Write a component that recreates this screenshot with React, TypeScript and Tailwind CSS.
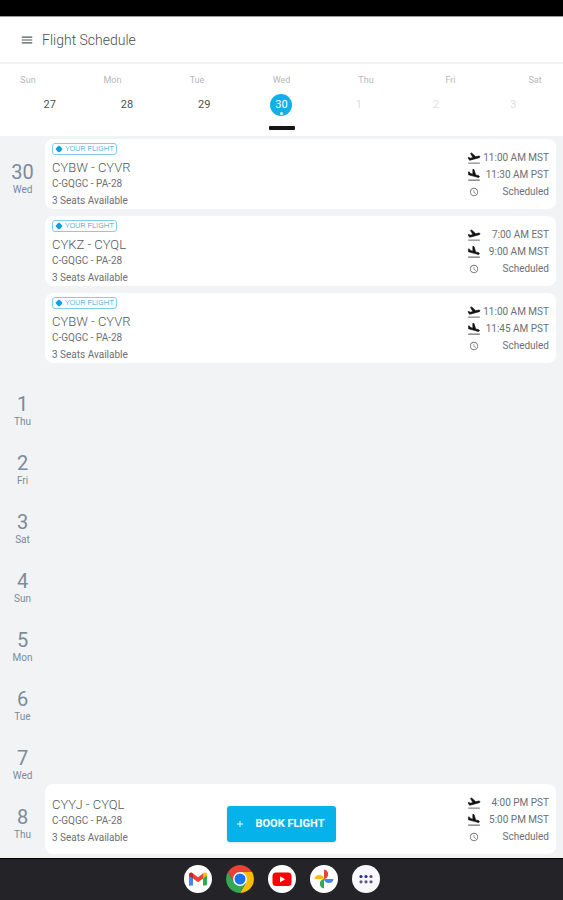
import { MdAdd, MdAccessTime, MdMenu } from 'react-icons/md';

type Flight = {
  route: string;
  aircraft: string;
  departs: string;
  arrives: string;
  mine?: boolean;
};

type Day = { date: number; name: string; flights: Flight[] };

const weekdays = ['Sun', 'Mon', 'Tue', 'Wed', 'Thu', 'Fri', 'Sat'];
const weekDates = [27, 28, 29, 30, 1, 2, 3];

const days: Day[] = [
  {
    date: 30,
    name: 'Wed',
    flights: [
      { route: 'CYBW - CYVR', aircraft: 'C-GQGC - PA-28', departs: '11:00 AM MST', arrives: '11:30 AM PST', mine: true },
      { route: 'CYKZ - CYQL', aircraft: 'C-GQGC - PA-28', departs: '7:00 AM EST', arrives: '9:00 AM MST', mine: true },
      { route: 'CYBW - CYVR', aircraft: 'C-GQGC - PA-28', departs: '11:00 AM MST', arrives: '11:45 AM PST', mine: true },
    ],
  },
  { date: 1, name: 'Thu', flights: [] },
  { date: 2, name: 'Fri', flights: [] },
  { date: 3, name: 'Sat', flights: [] },
  { date: 4, name: 'Sun', flights: [] },
  { date: 5, name: 'Mon', flights: [] },
  { date: 6, name: 'Tue', flights: [] },
  { date: 7, name: 'Wed', flights: [] },
  {
    date: 8,
    name: 'Thu',
    flights: [{ route: 'CYYJ - CYQL', aircraft: 'C-GQGC - PA-28', departs: '4:00 PM PST', arrives: '5:00 PM MST' }],
  },
];

function TakeoffIcon() {
  return (
    <svg viewBox="0 0 24 24" className="size-[14px] text-[#111111]" aria-hidden="true">
      <path d="M2 20h20v1.500H2z" fill="#555" />
      <path
        d="M22.070 9.640c-.210-.800-1.040-1.280-1.840-1.060L14.920 10l-6.900-6.430-1.930.510 4.140 7.170-4.970 1.330-1.970-1.540-1.450.390 1.820 3.160.770 1.330 1.600-.430 5.310-1.420 4.350-1.160L21 11.490c.810-.230 1.280-1.050 1.070-1.850z"
        fill="currentColor"
        stroke="currentColor"
        strokeWidth="1.200"
      />
    </svg>
  );
}

function LandingIcon() {
  return (
    <svg viewBox="0 0 24 24" className="size-[14px] text-[#111111]" aria-hidden="true">
      <path d="M2 20h20v1.500H2z" fill="#333" />
      <path
        d="M14 14.700l5.310 1.420c.800.210 1.620-.260 1.840-1.060.210-.800-.260-1.620-1.060-1.840l-5.310-1.420-2.760-9.020L10.090 2.300v8.280L5.120 9.250l-.930-2.320-1.450-.390v5.170l1.600.430z"
        fill="currentColor"
        stroke="currentColor"
        strokeWidth="1.200"
      />
    </svg>
  );
}

function BadgeIcon() {
  return (
    <svg viewBox="0 0 16 16" className="size-2" aria-hidden="true">
      <path d="M8 1l3 2.500L15 8l-4 4.500L8 15l-3-2.500L1 8l4-4.500z" fill="#12a0dc" />
      <circle cx="8" cy="8" r="5" fill="#12a0dc" />
    </svg>
  );
}

function WeekStrip() {
  return (
    <section className="border-t-2 border-[#f0f2f3] bg-white pb-[6px]">
      <div className="flex justify-between px-3 pt-2 text-[9px] leading-4 text-[#b4b8bb]">
        {weekdays.map((name) => (
          <span key={name} className="w-8 text-center">
            {name}
          </span>
        ))}
      </div>
      <div className="mt-[6px] grid grid-cols-7 px-[11px]">
        {weekDates.map((date) => (
          <div key={date} className="flex justify-center">
            {date === 30 ? (
              <button
                type="button"
                className="relative flex size-[22px] items-center justify-center rounded-full bg-[#12b0e8] text-[11px] text-white"
              >
                30
                <span className="absolute bottom-px size-[3px] rounded-full bg-white" />
              </button>
            ) : (
              <button
                type="button"
                className={date > 20 ? 'size-[22px] text-[11px] text-[#4c5054]' : 'size-[22px] text-[11px] text-[#dde0e3]'}
              >
                {date}
              </button>
            )}
          </div>
        ))}
      </div>
      <div className="mx-auto mt-[10px] h-1 w-[26px] rounded-[1px] bg-[#151515]" />
    </section>
  );
}

function FlightCard({ flight }: { flight: Flight }) {
  return (
    <article className="flex h-[70px] items-start justify-between rounded-lg bg-white px-[7px]">
      <div className="flex flex-col items-start pt-1">
        {flight.mine ? (
          <span className="flex h-3 items-center gap-[2px] rounded-[3px] border border-[#7fcdf0] px-[2px] text-[8px] leading-[10px] font-light text-[#1c9bd8]">
            <BadgeIcon />
            YOUR FLIGHT
          </span>
        ) : (
          <span className="h-1" />
        )}
        <h2 className="mt-1 text-[13px] leading-[18px] font-light text-[#55585c]">{flight.route}</h2>
        <p className="text-[10px] leading-[14px] text-[#6c7074]">{flight.aircraft}</p>
        <p className="mt-[3px] text-[10px] leading-[14px] text-[#6c7074]">3 Seats Available</p>
      </div>
      <ul className="w-[82px] pt-[10px] text-[10px] leading-[17px] text-[#6c7074]">
        <li className="flex items-center justify-between">
          <TakeoffIcon />
          {flight.departs}
        </li>
        <li className="flex items-center justify-between">
          <LandingIcon />
          {flight.arrives}
        </li>
        <li className="flex items-center justify-between">
          <MdAccessTime className="ml-[2px] size-[10px] text-[#777b80]" />
          Scheduled
        </li>
      </ul>
    </article>
  );
}

function DayRow({ day }: { day: Day }) {
  return (
    <section className={day.flights.length > 1 ? 'flex pb-2' : 'flex min-h-[59px]'}>
      <div className="w-[45px] shrink-0 pt-[22px] text-center text-[#7a8b9b]">
        <div className="text-[20px] leading-[23px]">{day.date}</div>
        <div className="text-[10px] leading-[11px]">{day.name}</div>
      </div>
      <div className="flex grow flex-col gap-[7px] pr-[7px]">
        {day.flights.map((flight, i) => (
          <FlightCard key={i} flight={flight} />
        ))}
      </div>
    </section>
  );
}

function GmailLogo() {
  return (
    <svg viewBox="0 0 28 28" className="size-7">
      <circle cx="14" cy="14" r="14" fill="#fff" />
      <path d="M5 20.5V9.5l4 3v8H6.5A1.5 1.5 0 0 1 5 20.5z" fill="#4285f4" />
      <path d="M19 20.500V12.500l4-3v9.500a1.500 1.500 0 0 1-1.500 1.500z" fill="#34a853" />
      <path d="M9 8.500l5 3.800 5-3.800v5l-5 3.800-5-3.800z" fill="#ea4335" />
      <path d="M5 9.500c0-2 2-2.600 3.300-1.600L9 8.500v5l-4-3z" fill="#c5221f" />
      <path d="M23 9.500c0-2-2-2.600-3.300-1.600L19 8.500v5l4-3z" fill="#fbbc04" />
    </svg>
  );
}

function ChromeLogo() {
  return (
    <svg viewBox="0 0 28 28" className="size-7">
      <path d="M14 7h12.100A14 14 0 0 0 1.900 7l6 10.500z" fill="#ea4335" />
      <path d="M20.100 17.500L14 28A14 14 0 0 0 26.100 7H14z" fill="#fbbc04" />
      <path d="M7.900 17.500L1.900 7A14 14 0 0 0 14 28l6.100-10.500z" fill="#34a853" />
      <circle cx="14" cy="14" r="7" fill="#fff" />
      <circle cx="14" cy="14" r="5.500" fill="#1a73e8" />
    </svg>
  );
}

function YouTubeLogo() {
  return (
    <svg viewBox="0 0 28 28" className="size-7">
      <circle cx="14" cy="14" r="14" fill="#fff" />
      <rect x="4.500" y="7.500" width="19" height="13.500" rx="3.500" fill="#f00" />
      <path d="M12 11.200v6l5.200-3z" fill="#fff" />
    </svg>
  );
}

function PhotosLogo() {
  return (
    <svg viewBox="0 0 28 28" className="size-7">
      <circle cx="14" cy="14" r="14" fill="#fff" />
      <path d="M14 4.500a4.800 4.800 0 0 1 0 9.500z" fill="#ea4335" />
      <path d="M23.500 14a4.800 4.800 0 0 1-9.500 0z" fill="#4285f4" />
      <path d="M14 23.500a4.800 4.800 0 0 1 0-9.500z" fill="#34a853" />
      <path d="M4.500 14a4.800 4.800 0 0 1 9.500 0z" fill="#fbbc04" />
    </svg>
  );
}

function AppsLogo() {
  return (
    <svg viewBox="0 0 28 28" className="size-7">
      <circle cx="14" cy="14" r="14" fill="#f7f7fd" />
      <circle cx="9" cy="11.500" r="1.600" fill="#2b2f86" />
      <circle cx="14" cy="11.500" r="1.600" fill="#2b2f86" />
      <circle cx="19" cy="11.500" r="1.600" fill="#70456f" />
      <circle cx="9" cy="16.800" r="1.600" fill="#5b5b80" />
      <circle cx="14" cy="16.800" r="1.600" fill="#5b5b80" />
      <circle cx="19" cy="16.800" r="1.600" fill="#5b5b80" />
    </svg>
  );
}

const dock = [
  { name: 'Gmail', Logo: GmailLogo },
  { name: 'Chrome', Logo: ChromeLogo },
  { name: 'YouTube', Logo: YouTubeLogo },
  { name: 'Photos', Logo: PhotosLogo },
  { name: 'All apps', Logo: AppsLogo },
];

export default function App() {
  return (
    <div className="flex min-h-screen flex-col bg-[#f1f3f5] font-['Roboto','Liberation_Sans',sans-serif]">
      <div className="h-4 bg-black" />
      <header className="flex h-[46px] items-center gap-2 border-t border-[#9a9a9a] bg-white px-5">
        <button type="button" aria-label="Menu" className="text-[#55585c]">
          <MdMenu className="size-[14px]" />
        </button>
        <h1 className="text-[14px] leading-5 font-light text-[#4b4e52]">Flight Schedule</h1>
      </header>
      <WeekStrip />
      <main className="relative grow pt-[3px] pb-[3px]">
        {days.map((day) => (
          <DayRow key={day.date} day={day} />
        ))}
        <div className="absolute inset-x-0 bottom-4 flex justify-center">
          <button
            type="button"
            className="flex h-9 items-center gap-[10px] rounded-[3px] bg-[#06b2ea] pr-[11px] pl-2 text-[11px] font-bold text-white shadow"
          >
            <MdAdd className="size-[10px]" />
            BOOK FLIGHT
          </button>
        </div>
      </main>
      <nav aria-label="Dock" className="flex h-[42px] shrink-0 items-center justify-center gap-[14px] border-t border-black bg-[#232328] pb-px">
        {dock.map(({ name, Logo }) => (
          <button key={name} type="button" aria-label={name}>
            <Logo />
          </button>
        ))}
      </nav>
    </div>
  );
}
